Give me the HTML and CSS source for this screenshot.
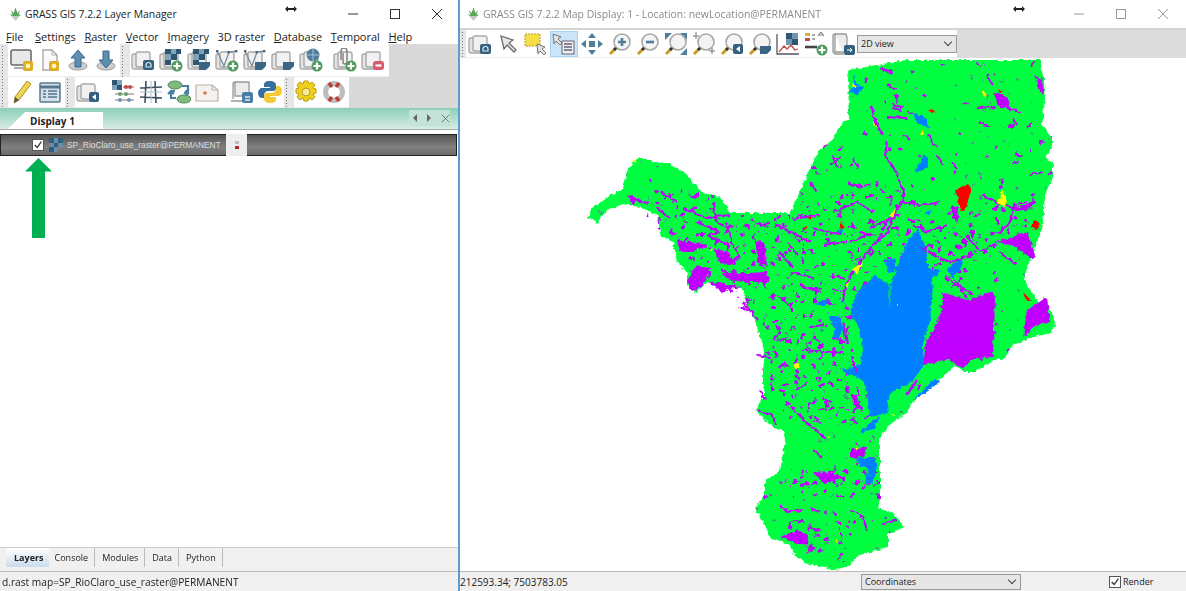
FILE: index.html
```html
<!DOCTYPE html>
<html>
    <head>
        <title>GRASS GIS 7.2.2</title>
        <link rel="stylesheet" href="styles.css">
    </head>
    <body>
        <svg class="defs" width="0" height="0">
            <defs>
                <filter id="rough" filterUnits="userSpaceOnUse" x="460" y="58" width="726" height="513">
                    <feTurbulence type="fractalNoise" baseFrequency=".22" numOctaves="2" seed="4" result="n"/>
                    <feDisplacementMap in="SourceGraphic" in2="n" scale="5" xChannelSelector="R" yChannelSelector="G"/>
                </filter>
                <filter id="specksparse" filterUnits="userSpaceOnUse" x="460" y="58" width="726" height="513" color-interpolation-filters="sRGB">
                    <feTurbulence type="fractalNoise" baseFrequency=".13" numOctaves="2" seed="7"/>
                    <feColorMatrix values="0 0 0 0 .75  0 0 0 0 0  0 0 0 0 1  14 0 0 0 -10" result="s"/>
                    <feComposite in="s" in2="SourceAlpha" operator="in"/>
                </filter>
                <filter id="speckdense" filterUnits="userSpaceOnUse" x="460" y="58" width="726" height="513" color-interpolation-filters="sRGB">
                    <feTurbulence type="fractalNoise" baseFrequency=".16" numOctaves="2" seed="11"/>
                    <feColorMatrix values="0 0 0 0 .75  0 0 0 0 0  0 0 0 0 1  14 0 0 0 -8.9" result="s"/>
                    <feComposite in="s" in2="SourceAlpha" operator="in"/>
                </filter>
                <symbol id="stack" viewBox="0 0 24 24"><rect x="1" y="6" width="14" height="15" rx="2" fill="#e4e4e4" stroke="#a9a9a9" stroke-width="1.4"/><rect x="5" y="4" width="14" height="15" rx="2" fill="#f1f1f1" stroke="#a9a9a9" stroke-width="1.4"/></symbol>
                <symbol id="plus" viewBox="0 0 24 24"><circle cx="18" cy="18" r="5.5" fill="#4f9a5f"/><path d="M18 14.5v7M14.5 18h7" stroke="#fff" stroke-width="2.2"/></symbol>
                <symbol id="minus" viewBox="0 0 24 24"><rect x="12" y="13" width="11" height="9" rx="3" fill="#d9596a"/><path d="M14.5 17.5h6" stroke="#fff" stroke-width="2.2"/></symbol>
                <symbol id="dark" viewBox="0 0 24 24"><rect x="12" y="12" width="11" height="10" rx="2" fill="#33607f"/><path d="M15 17a2.5 2.5 0 0 1 5 0v2h-5z" fill="none" stroke="#dfe8ee" stroke-width="1.2"/></symbol>
                <symbol id="solid" viewBox="0 0 24 24"><path d="M12 14h11v4l-4 4h-7z" fill="#3b6585"/></symbol>
                <symbol id="checker" viewBox="0 0 24 24"><path d="M6 1h6v5H6zM12 6h6v6h-6zM6 12h6v5H6zM17 1h5v5h-5z" fill="#2d5672"/><path d="M12 1h5v5h-5zM6 6h6v6H6z" fill="#7fa3bb"/></symbol>
                <symbol id="rastericon" viewBox="0 0 14 14"><path d="M0 0h5v5H0zM5 5h4v4H5zM0 9h5v5H0zM9 0h5v5H9z" fill="#2f5f80"/><path d="M5 0h4v5H5zM0 5h5v4H0zM9 5h5v4H9zM5 9h4v5H5z" fill="#6b8ea6"/></symbol>
                <symbol id="vector" viewBox="0 0 24 24"><path d="M2 3l7 15 5-14 8-1" fill="none" stroke="#7d8e99" stroke-width="1.3"/><rect x="1" y="2" width="2.4" height="2.4" fill="#567"/><rect x="12.5" y="3" width="2.4" height="2.4" fill="#567"/><rect x="20" y="2" width="2.4" height="2.4" fill="#567"/></symbol>
                <symbol id="monitor" viewBox="0 0 24 24"><rect x="1" y="2" width="20" height="15" rx="2" fill="#e8e8e8" stroke="#666" stroke-width="1.5"/><path d="M4 20h14" stroke="#aaa" stroke-width="2"/><rect x="13" y="13" width="10" height="10" rx="2" fill="#dcae1f"/><circle cx="18" cy="18" r="2.4" fill="#fff3b5"/></symbol>
                <symbol id="doc" viewBox="0 0 24 24"><path d="M5 2h9l5 5v15H5z" fill="#fafafa" stroke="#aaa" stroke-width="1.4"/><path d="M14 2v5h5" fill="none" stroke="#aaa"/><rect x="11" y="13" width="10" height="10" rx="2" fill="#dcae1f"/><circle cx="16" cy="18" r="2.4" fill="#fff3b5"/></symbol>
                <symbol id="up" viewBox="0 0 24 24"><ellipse cx="12" cy="18" rx="9" ry="4" fill="#cfcfcf" stroke="#999"/><path d="M12 2l7 8h-4v9H9v-9H5z" fill="#5f8fb0" stroke="#3d6785"/></symbol>
                <symbol id="down" viewBox="0 0 24 24"><ellipse cx="12" cy="18" rx="9" ry="4" fill="#cfcfcf" stroke="#999"/><path d="M12 20l7-8h-4V3H9v9H5z" fill="#5f8fb0" stroke="#3d6785"/></symbol>
                <symbol id="globe" viewBox="0 0 24 24"><circle cx="14" cy="7" r="6.5" fill="#4f7d9c"/><path d="M8 7h12M14 1v12" stroke="#a8c2d3"/></symbol>
                <symbol id="clip" viewBox="0 0 24 24"><path d="M8 12V3a3 3 0 0 1 6 0v11a2 2 0 0 1-4 0V5" fill="none" stroke="#7d7d7d" stroke-width="1.4"/></symbol>
                <symbol id="pencil" viewBox="0 0 24 24"><path d="M17 1l4 3L9 20l-5 3 1-6z" fill="#ecd552" stroke="#a98f2c"/><path d="M4 23l1-6 4 3z" fill="#555"/></symbol>
                <symbol id="table" viewBox="0 0 24 24"><rect x="2" y="3" width="20" height="19" rx="1" fill="#d5e1ea" stroke="#55788f" stroke-width="1.5"/><path d="M2 7h20" stroke="#55788f" stroke-width="3"/><path d="M5 11h3M10 11h9M5 14h3M10 14h9M5 17h3M10 17h9" stroke="#55788f" stroke-width="1.5"/></symbol>
                <symbol id="calc" viewBox="0 0 24 24"><path d="M1 0h5v5H1zM6 5h5v5H6z" fill="#2d5672"/><path d="M6 0h5v5H6zM1 5h5v5H1z" fill="#7fa3bb"/><path d="M12 7h11M4 14h19M4 20h19" stroke="#8a6f6f"/><circle cx="15" cy="7" r="2" fill="#c94848"/><circle cx="19" cy="7" r="2" fill="#c94848"/><circle cx="9" cy="14" r="2" fill="#62a36c"/><circle cx="15" cy="14" r="2" fill="#62a36c"/><circle cx="9" cy="20" r="2" fill="#6d94b1"/><circle cx="18" cy="20" r="2" fill="#6d94b1"/></symbol>
                <symbol id="grid" viewBox="0 0 24 24"><path d="M7 1l-1 22M16 1l1 22M1 8l22-1M1 17l22 1" stroke="#3a4f5e" stroke-width="1.6" fill="none"/><path d="M1 12h22M12 1v22" stroke="#a9c2d3" fill="none"/></symbol>
                <symbol id="swap" viewBox="0 0 24 24"><ellipse cx="8" cy="5" rx="7" ry="4" fill="#7fbb7f" stroke="#4f8a5a"/><ellipse cx="17" cy="19" rx="7" ry="4" fill="#7fbb7f" stroke="#4f8a5a"/><path d="M15 6h6v7h-3M9 18H4v-7h4M7 14l-3-3-3 3M20 10l-2 3 3 2" fill="none" stroke="#4b7ea3" stroke-width="2.2"/></symbol>
                <symbol id="note" viewBox="0 0 24 24"><path d="M1 5h16l6 5v11H1z" fill="#f5f1ec" stroke="#b9b0a8" stroke-width="1.2"/><path d="M17 5v5h6" fill="none" stroke="#b9b0a8"/><path d="M8 13h4M10 11v4" stroke="#d0754f" stroke-width="1.3"/></symbol>
                <symbol id="script" viewBox="0 0 24 24"><path d="M5 2h14v14H5zM5 2a2 2 0 0 0-2 2v15M1 21h15" fill="#ececec" stroke="#999" stroke-width="1.3"/><rect x="12" y="12" width="11" height="11" rx="2" fill="#4a7ea6"/><path d="M15 17h5M15 20h5" stroke="#dfe8ee" stroke-width="1.4"/></symbol>
                <symbol id="python" viewBox="0 0 24 24"><path d="M12 1c-5 0-6 2-6 4v2h6v1H4c-2 0-4 2-4 5s2 5 4 5h2v-3c0-2 2-4 4-4h5c2 0 3-1 3-3V5c0-2-2-4-6-4z" fill="#376f9f"/><path d="M12 23c5 0 6-2 6-4v-2h-6v-1h8c2 0 4-2 4-5s-2-5-4-5h-2v3c0 2-2 4-4 4H9c-2 0-3 1-3 3v3c0 2 2 4 6 4z" fill="#f4c935"/></symbol>
                <symbol id="gear" viewBox="0 0 24 24"><path d="M10 1h4l1 3 3-2 3 3-2 3 3 1v4l-3 1 2 3-3 3-3-2-1 3h-4l-1-3-3 2-3-3 2-3-3-1v-4l3-1-2-3 3-3 3 2z" fill="#eed01f" stroke="#b99a16"/><circle cx="12" cy="12" r="4" fill="#f8ec9a" stroke="#b99a16"/></symbol>
                <symbol id="ring" viewBox="0 0 24 24"><circle cx="12" cy="12" r="8.5" fill="none" stroke="#bdbdbd" stroke-width="5"/><path d="M7 3l3 4M17 3l-3 4M7 21l3-4M17 21l-3-4" stroke="#b93a3a" stroke-width="3.4"/></symbol>
                <symbol id="pointer" viewBox="0 0 24 24"><path d="M5 4l12 4-4 3 7 7-2 2-7-7-3 4z" fill="#e6e6e6" stroke="#6d6d6d" stroke-width="1.3"/></symbol>
                <symbol id="select" viewBox="0 0 24 24"><rect x="1" y="2" width="15" height="12" fill="#f5df45" stroke="#c09c2b" stroke-dasharray="2 1"/><path d="M13 12l8 3-3 2 4 4-2 2-4-4-2 3z" fill="#e2e2e2" stroke="#777"/></symbol>
                <symbol id="query" viewBox="0 0 24 24"><path d="M1 2l8 3-3 2 4 4-2 2-4-4-2 3z" fill="#e2e2e2" stroke="#777"/><rect x="10" y="9" width="12" height="13" fill="#eee" stroke="#667"/><path d="M12 12h8M12 15h8M12 18h8" stroke="#667" stroke-width="1.3"/></symbol>
                <symbol id="pan" viewBox="0 0 24 24"><path d="M12 1l4 5H8zM12 23l-4-5h8zM1 12l5-4v8zM23 12l-5 4V8z" fill="#4f7d9c"/><rect x="9" y="9" width="6" height="6" fill="#4f7d9c"/></symbol>
                <symbol id="glass" viewBox="0 0 24 24"><circle cx="14" cy="10" r="8" fill="#f4f4f4" stroke="#a8a8a8" stroke-width="1.6"/><path d="M8 16l-6 6" stroke="#c79d22" stroke-width="3"/><path d="M8 16l-2 2" stroke="#333" stroke-width="3"/></symbol>
                <symbol id="glassplus" viewBox="0 0 24 24"><path d="M14 6v8M10 10h8" stroke="#4f7d9c" stroke-width="2.6"/></symbol>
                <symbol id="glassminus" viewBox="0 0 24 24"><path d="M10 10h8" stroke="#4f7d9c" stroke-width="2.6"/></symbol>
                <symbol id="corners" viewBox="0 0 24 24"><path d="M1 1h7L1 8zM23 1h-7l7 7zM23 23h-7l7-7z" fill="#4f7d9c"/></symbol>
                <symbol id="ruler" viewBox="0 0 24 24"><path d="M4 0v7M1 4h6M17 19h6M20 16v6" stroke="#777"/></symbol>
                <symbol id="back" viewBox="0 0 24 24"><rect x="13" y="12" width="10" height="10" rx="2" fill="#33607f"/><path d="M20 14l-4 3 4 3z" fill="#fff"/></symbol>
                <symbol id="profile" viewBox="0 0 24 24"><path d="M1 2v20h22" fill="none" stroke="#556" stroke-width="1.3"/><path d="M10 1h6v6h-6zM16 7h6v6h-6z" fill="#2d5672"/><path d="M16 1h6v6h-6zM10 7h6v6h-6z" fill="#6f97b2"/><path d="M3 20l5-6 3 3 4-4 4 5 3-1" fill="none" stroke="#c94848" stroke-width="1.3"/></symbol>
                <symbol id="legend" viewBox="0 0 24 24"><rect x="1" y="1" width="5" height="3" fill="#d8b23a"/><rect x="1" y="6" width="5" height="3" fill="#c94848"/><path d="M8 3h3M8 7h3" stroke="#555"/><path d="M1 15h12" stroke="#444" stroke-width="2.6"/><path d="M14 4l3-4 3 4M15 3h4" fill="none" stroke="#888" stroke-width="1.2"/></symbol>
                <symbol id="mappage" viewBox="0 0 24 24"><path d="M3 2h11l1 3v15H3zM3 2a2 2 0 0 0-2 2v16l2 2h9" fill="#ececec" stroke="#9a9a9a" stroke-width="1.3"/><rect x="12" y="13" width="11" height="10" rx="2" fill="#33607f"/><path d="M15 18h5M18 16l2 2-2 2" fill="none" stroke="#fff"/></symbol>
                <symbol id="winmin" viewBox="0 0 12 12"><path d="M1 6h10" stroke="currentColor"/></symbol>
                <symbol id="winmax" viewBox="0 0 12 12"><rect x="1.5" y="1.5" width="9" height="9" fill="none" stroke="currentColor"/></symbol>
                <symbol id="winclose" viewBox="0 0 12 12"><path d="M1 1l10 10M11 1L1 11" stroke="currentColor"/></symbol>
                <symbol id="resize" viewBox="0 0 12 8"><path d="M0 4l3-3v2h6V1l3 3-3 3V5H3v2z" fill="#222"/></symbol>
                <symbol id="grasslogo" viewBox="0 0 16 16"><path d="M8 15L2 8l3 1-2-5 3 3 2-6 2 6 3-3-2 5 3-1z" fill="#58a55c"/><path d="M8 15L4 10l8 0z" fill="#c8c8c8"/></symbol>
                <path id="boundary" d="M848 70L906 60L1040 60L1044 80L1045 100L1042 125L1052 137L1052 147L1045 158L1053 163L1052 178L1045 195L1043 225L1033 255L1023 278L1040 305L1050 310L1056 325L1050 333L1030 338L1012 345L1005 358L995 360L975 372L965 372L955 365L942 378L930 383L915 400L905 415L895 420L888 427L885 432L880 437L880 500L878 508L890 512L898 518L904 527L888 535L888 548L870 552L858 556L850 565L835 570L825 567L805 563L793 553L790 545L770 537L765 525L755 508L765 495L765 480L780 472L785 440L783 430L770 425L755 410L765 395L762 375L765 355L755 320L745 300L743 288L708 282L695 293L687 285L687 272L677 262L673 242L662 237L657 215L640 207L623 204L607 210L597 223L588 217L593 207L623 188L628 168L640 157L655 163L668 162L683 172L703 192L720 197L730 213L790 213L810 168L820 150L830 143L843 122L849 118Z"/>
            </defs>
        </svg>

        <div class="app">
            <div class="manager">
                <div class="titlebar">
                    <svg class="applogo"><use href="#grasslogo"/></svg>
                    <span class="apptitle">GRASS GIS 7.2.2 Layer Manager</span>
                    <svg class="cursor"><use href="#resize"/></svg>
                    <div class="winbtns">
                        <svg><use href="#winmin"/></svg>
                        <svg><use href="#winmax"/></svg>
                        <svg><use href="#winclose"/></svg>
                    </div>
                </div>
                <div class="menubar">
                    <span><u>F</u>ile</span>
                    <span><u>S</u>ettings</span>
                    <span><u>R</u>aster</span>
                    <span><u>V</u>ector</span>
                    <span><u>I</u>magery</span>
                    <span>3D r<u>a</u>ster</span>
                    <span><u>D</u>atabase</span>
                    <span><u>T</u>emporal</span>
                    <span><u>H</u>elp</span>
                </div>
                <div class="toolrow first">
                    <div class="grip"></div>
                    <div class="tools pad-a">
                        <svg class="tool"><use href="#monitor"/></svg>
                        <svg class="tool"><use href="#doc"/></svg>
                        <svg class="tool"><use href="#up"/></svg>
                        <svg class="tool"><use href="#down"/></svg>
                    </div>
                    <div class="grip"></div>
                    <div class="tools pad-b">
                        <svg class="tool"><use href="#stack"/><use href="#dark"/></svg>
                        <svg class="tool"><use href="#stack"/><use href="#checker"/><use href="#plus"/></svg>
                        <svg class="tool"><use href="#stack"/><use href="#checker"/><use href="#solid"/></svg>
                        <svg class="tool"><use href="#stack"/><use href="#vector"/><use href="#plus"/></svg>
                        <svg class="tool"><use href="#stack"/><use href="#vector"/><use href="#solid"/></svg>
                        <svg class="tool"><use href="#stack"/><use href="#solid"/></svg>
                        <svg class="tool"><use href="#stack"/><use href="#globe"/><use href="#plus"/></svg>
                        <svg class="tool sep"><use href="#stack"/><use href="#clip"/><use href="#plus"/></svg>
                        <svg class="tool"><use href="#stack"/><use href="#minus"/></svg>
                    </div>
                </div>
                <div class="toolrow second">
                    <div class="grip"></div>
                    <div class="tools pad-c">
                        <svg class="tool"><use href="#pencil"/></svg>
                        <svg class="tool"><use href="#table"/></svg>
                    </div>
                    <div class="grip"></div>
                    <div class="tools pad-f">
                        <svg class="tool"><use href="#stack"/><use href="#back"/></svg>
                        <svg class="tool sep"><use href="#calc"/></svg>
                        <svg class="tool"><use href="#grid"/></svg>
                        <svg class="tool"><use href="#swap"/></svg>
                        <svg class="tool"><use href="#note"/></svg>
                        <svg class="tool sep"><use href="#script"/></svg>
                        <svg class="tool"><use href="#python"/></svg>
                    </div>
                    <div class="grip"></div>
                    <div class="tools pad-d">
                        <svg class="tool"><use href="#gear"/></svg>
                        <svg class="tool"><use href="#ring"/></svg>
                    </div>
                </div>
                <div class="noteband">
                    <div class="displaytab">Display 1</div>
                    <div class="bandctrl">
                        <span class="tri left"></span>
                        <span class="tri right"></span>
                        <svg><use href="#winclose"/></svg>
                    </div>
                </div>
                <div class="treepanel">
                    <div class="layerrow">
                        <span class="treeline"></span>
                        <span class="check">
                            <svg viewBox="0 0 12 12"><path d="M2 6l3 3 5-7" fill="none" stroke="#333" stroke-width="1.5"/></svg>
                        </span>
                        <svg class="layericon"><use href="#rastericon"/></svg>
                        <span class="layername">SP_RioClaro_use_raster@PERMANENT</span>
                        <span class="layerbtn"><i class="dot-a"></i><i class="dot-b"></i></span>
                    </div>
                    <div class="uparrow"></div>
                </div>
                <div class="bottomtabs">
                    <span class="btab active">Layers</span>
                    <span class="btab">Console</span>
                    <span class="btab">Modules</span>
                    <span class="btab">Data</span>
                    <span class="btab">Python</span>
                </div>
                <div class="statusbar">d.rast map=SP_RioClaro_use_raster@PERMANENT</div>
            </div>

            <div class="display">
                <div class="titlebar muted">
                    <svg class="applogo"><use href="#grasslogo"/></svg>
                    <span class="apptitle">GRASS GIS 7.2.2 Map Display: 1 - Location: newLocation@PERMANENT</span>
                    <svg class="cursor"><use href="#resize"/></svg>
                    <div class="winbtns">
                        <svg><use href="#winmin"/></svg>
                        <svg><use href="#winmax"/></svg>
                        <svg><use href="#winclose"/></svg>
                    </div>
                </div>
                <div class="maptools">
                    <div class="grip"></div>
                    <div class="tools pad-e">
                        <svg class="tool"><use href="#stack"/><use href="#dark"/></svg>
                        <svg class="tool"><use href="#pointer"/></svg>
                        <svg class="tool"><use href="#select"/></svg>
                        <span class="toolon"><svg class="tool"><use href="#query"/></svg></span>
                        <svg class="tool"><use href="#pan"/></svg>
                        <svg class="tool"><use href="#glass"/><use href="#glassplus"/></svg>
                        <svg class="tool"><use href="#glass"/><use href="#glassminus"/></svg>
                        <svg class="tool"><use href="#corners"/><use href="#glass"/></svg>
                        <svg class="tool"><use href="#ruler"/><use href="#glass"/></svg>
                        <svg class="tool"><use href="#glass"/><use href="#back"/></svg>
                        <svg class="tool"><use href="#glass"/><use href="#solid"/></svg>
                        <svg class="tool"><use href="#profile"/></svg>
                        <svg class="tool"><use href="#legend"/><use href="#plus"/></svg>
                        <svg class="tool"><use href="#mappage"/></svg>
                        <div class="viewselect">2D view<span class="chev"></span></div>
                    </div>
                </div>
                <div class="mapcanvas">
                    <svg viewBox="460 58 726 513" width="726" height="513">
                        <g filter="url(#rough)">
                            <use href="#boundary" class="land"/>
                            <g filter="url(#specksparse)">
                                <use href="#boundary"/>
                            </g>
                            <!-- busy parts of the basin: west arm and the middle -->
                            <g filter="url(#speckdense)">
                                <path d="M632 185L700 192L730 215L790 215L815 200L880 180L925 205L1035 200L1020 240L950 290L880 265L850 310L810 345L775 325L745 312L708 282L690 290L675 240L650 225Z"/>
                                <path d="M765 300L850 320L860 400L880 430L790 420L760 380Z"/>
                                <path d="M790 470L880 470L880 500L790 500ZM770 520L860 520L840 560L790 540Z"/>
                            </g>
                            <g class="water">
                                <path d="M850 312L857 292L875 275L890 285L907 242L917 228L927 252L927 268L942 270L933 282L932 300L930 320L923 343L923 367L910 383L890 393L887 413L870 417L868 400L863 380L840 370L860 365L863 350L860 330Z"/>
                                <path d="M853 73L858 85L863 87L858 95L850 92L854 84Z"/>
                                <path d="M913 113L923 115L928 123L930 129L923 125L918 125Z"/>
                                <path d="M923 154L928 158L928 167L915 173L918 167Z"/>
                                <path d="M947 268L962 257L963 265L953 279Z"/>
                                <path d="M884 259L895 258L895 272L888 273Z"/>
                                <path d="M815 302L828 300L825 306L817 306Z"/>
                                <path d="M925 212L932 210L928 216Z"/>
                                <path d="M837 232L845 228L840 235Z"/>
                                <path d="M860 433L873 420L880 417L875 428Z"/>
                                <path d="M857 458L875 458L877 470L872 484L866 484L868 470L860 465Z"/>
                                <path d="M913 400L933 380L940 380L930 390Z"/>
                                <path d="M828 317L840 317L843 330L838 338L832 338L835 328Z"/>
                                <path d="M840 302L845 302L844 304Z"/>
                            </g>
                            <path class="land" d="M932 372L950 360L942 378L925 380Z"/>
                            <path class="land" d="M887 400L900 397L910 403L893 420Z"/>
                            <path class="land" d="M932 280L942 270L945 285L935 308Z"/>
                            <path class="landline" d="M890 285V305"/>
                            <g class="crop">
                                <path d="M942 292L967 300L993 291L995 300L993 357L975 358L963 368L950 360L933 363L923 365L925 347L933 330L942 310Z"/>
                                <path d="M997 242L1027 232L1035 255L1032 258L1010 245Z"/>
                                <path d="M1034 75L1042 80L1044 94L1040 91Z"/>
                                <path d="M1013 212L1033 200L1036 202L1027 209Z"/>
                                <path d="M755 240L765 243L767 266L758 263Z"/>
                                <path d="M677 240L697 243L707 245L693 252L680 252Z"/>
                                <path d="M713 248L727 252L737 265L720 263Z"/>
                                <path d="M723 273L747 273L767 272L770 282L743 282L727 279Z"/>
                                <path d="M697 265L710 268L703 285L692 292L687 282Z"/>
                                <path d="M708 282L733 285L743 287L720 290Z"/>
                                <path d="M628 195L638 198L633 206Z"/>
                                <path d="M952 207L958 208L957 222L952 218Z"/>
                                <path d="M993 92L1007 97L1010 108L1000 107Z"/>
                                <path d="M1027 310L1047 297L1050 322L1033 327L1023 337Z"/>
                                <path d="M780 537L797 530L808 535L807 545L793 542Z"/>
                                <path d="M808 527L823 530L817 532Z"/>
                                <path d="M810 543L817 548L807 553Z"/>
                                <path d="M850 448L867 447L863 457L850 458Z"/>
                                <path d="M813 472L833 473L847 478L823 483Z"/>
                                <path d="M852 395L857 395L858 405L853 405Z"/>
                            </g>
                            <g class="streak">
                                <path d="M872 105L873 115L878 127L883 135"/>
                                <path d="M887 142L885 155L895 170L900 183L905 193L900 205L892 218L888 232L873 245L863 258L853 272L845 288L843 302"/>
                                <path d="M630 197L647 203M660 192L677 202M683 208L707 218L730 215M657 208L670 218"/>
                                <path d="M713 203L717 222L727 228L733 245L740 258"/>
                                <path d="M697 222L720 232M707 235L727 245"/>
                                <path d="M750 218L760 225L770 222M775 225L797 235L810 242M780 252L793 268M787 242L797 255"/>
                                <path d="M793 272L813 278M800 285L820 292M777 295L790 305"/>
                                <path d="M813 228L840 235M823 245L847 242M850 242L867 235M870 228L897 215"/>
                                <path d="M800 218L820 215M833 212L857 202L873 212M847 182L863 188M853 158L858 168"/>
                                <path d="M810 182L817 192M810 168L817 168M830 165L840 158M833 155L837 168"/>
                                <path d="M900 202L923 205L940 202M913 225L927 232L947 225M967 235L980 252L997 242"/>
                                <path d="M973 255L950 262L940 258M933 245L923 248L938 258"/>
                                <path d="M982 195L997 203L1013 208L1010 222L1000 232M1027 202L1013 205"/>
                                <path d="M928 135L937 148M937 155L943 165M903 135L910 140M897 148L903 150"/>
                                <path d="M892 105L903 107L900 110L893 108M887 117L907 118M887 85L895 88M880 68L893 73"/>
                                <path d="M977 62L978 65M987 75L993 85M1007 108L1020 112M977 108L997 107M1013 118L1017 125"/>
                                <path d="M1027 127L1033 122M1015 153L1023 157M1013 163L1020 162M1030 175L1043 172M1003 178L1000 188"/>
                                <path d="M823 147L828 145M957 168L953 163M978 122L990 127"/>
                                <path d="M947 278L973 295M957 282L967 298M1000 252L1017 265"/>
                                <path d="M743 302L758 320M757 355L770 357M775 325L780 333L773 340M810 327L823 325M813 337L820 342"/>
                                <path d="M803 350L843 353M837 380L843 380M797 390L807 383M823 398L832 403M793 408L807 423L827 440"/>
                                <path d="M760 390L765 400M757 410L773 415L775 425M813 450L822 457M800 485L808 483M837 497L845 497"/>
                                <path d="M780 505L787 512L803 510M810 508L820 512M852 510L863 517L867 530M832 512L837 515M880 525L897 520"/>
                                <path d="M843 323L847 343M852 357L857 373M917 380L907 395M860 400L853 413M953 343L967 337"/>
                            </g>
                            <g class="burn">
                                <path d="M957 189L969 183L971 189L965 212L962 212L958 203Z"/>
                                <path d="M1030 227L1035 220L1040 225L1037 230Z"/>
                                <path d="M840 222L845 228L840 229Z"/>
                                <path d="M929 110L937 112L930 113Z"/>
                                <path d="M998 90L1004 91L1000 94Z"/>
                                <path d="M1023 292L1031 300L1027 301Z"/>
                                <path d="M803 228L808 227L805 230ZM808 217L812 218L810 221ZM792 290L794 292L792 294Z"/>
                            </g>
                            <g class="dry">
                                <path d="M1002 189L1007 202L1004 207L998 203Z"/>
                                <path d="M921 129L925 134L922 134Z"/>
                                <path d="M982 90L987 96L982 95Z"/>
                                <path d="M633 161L637 160L635 163ZM712 248L713 251L711 251ZM703 238L705 239L703 239Z"/>
                                <path d="M873 118L877 127L875 127ZM852 83L857 87L853 87ZM853 268L863 262L857 275ZM845 285L850 282L847 288ZM890 215L897 208L892 218Z"/>
                                <circle cx="797" cy="366" r="3"/>
                                <circle cx="898" cy="305" r="1"/>
                                <circle cx="829" cy="437" r="1"/>
                                <circle cx="893" cy="415" r="1"/>
                                <circle cx="837" cy="540" r="1"/>
                                <circle cx="857" cy="448" r="1.4"/>
                            </g>
                        </g>
                    </svg>
                </div>
                <div class="mapstatus">
                    <span class="coords">212593.34; 7503783.05</span>
                    <div class="coordselect">Coordinates<span class="chev"></span></div>
                    <span class="check render">
                        <svg viewBox="0 0 12 12"><path d="M2 6l3 3 5-7" fill="none" stroke="#333" stroke-width="1.5"/></svg>
                    </span>
                    <span class="renderlabel">Render</span>
                </div>
            </div>
        </div>
    </body>
</html>
```

FILE: styles.css
```css
body {
    margin: 0;
    background: #fff;
    font-family: "Open Sans", "Noto Sans", sans-serif;
    color: #222;
}
.defs {
    display: block;
    height: 0;
}
.app {
    display: flex;
    width: 1186px;
    height: 591px;
    overflow: hidden;
    filter: blur(.3px);
}
.manager {
    width: 460px;
    flex: none;
    box-sizing: border-box;
    display: flex;
    flex-direction: column;
    border-right: 2px solid #5d9bd3;
    background: #f0f0f0;
}
.display {
    flex: 1;
    display: flex;
    flex-direction: column;
    min-width: 0;
}

/* window title */
.titlebar {
    height: 28px;
    flex: none;
    display: flex;
    align-items: center;
    background: #fff;
    padding-left: 8px;
}
.display .titlebar {
    padding-left: 6px;
}
.applogo {
    width: 15px;
    height: 16px;
    flex: none;
}
.apptitle {
    margin-left: 2px;
    font-size: 10.4px;
    white-space: nowrap;
}
.manager .apptitle {
    width: 260px;
}
.display .apptitle {
    width: 530px;
}
.muted .apptitle {
    color: #8a8a8a;
}
.cursor {
    width: 12px;
    height: 8px;
    margin-bottom: 10px;
    flex: none;
}
.winbtns {
    display: flex;
    gap: 30px;
    margin-left: 50px;
    color: #333;
}
.winbtns svg {
    width: 12px;
    height: 12px;
}
.display .winbtns {
    margin-left: 48px;
    color: #999;
}

/* menu */
.menubar {
    height: 16px;
    flex: none;
    display: flex;
    align-items: center;
    gap: 8.6px;
    padding-left: 6px;
    background: #fff;
    font-size: 11px;
}
.menubar span:first-child {
    margin-right: 3px;
}

/* tool rows */
.toolrow {
    display: flex;
    flex: none;
    background: #d9d9d9;
}
.toolrow.first {
    height: 33px;
}
.toolrow.second {
    height: 31px;
}
.grip {
    width: 8px;
    flex: none;
    background: radial-gradient(circle, #777 0.6px, transparent 1px) 1px 4px / 3px 3px repeat-y, #e6e6e6;
    background-size: 3px 3px;
}
.tools {
    display: flex;
    align-items: center;
    gap: 4px;
    background: #fff;
    border-bottom: 1px solid #eee;
}
.tools + .grip {
    width: 10px;
}
.tool {
    width: 24px;
    height: 24px;
    flex: none;
}
.tool.sep {
    margin-left: 6px;
}
.second .tool.sep {
    margin-left: 7px;
}
.pad-a {
    padding: 0 2px;
}
.pad-b {
    padding: 0 4px 0 1px;
}
.pad-c {
    padding: 0 3px 0 2px;
}
.pad-d {
    padding: 0 3px 0 0;
}
.pad-f {
    padding: 0 2px 0 1px;
}
.toolon {
    display: flex;
    align-items: center;
    justify-content: center;
    width: 28px;
    height: 26px;
    margin: 0 -2px;
    background: #cce4f7;
    border: 1px solid #a9d3f3;
    box-sizing: border-box;
}

/* notebook band */
.noteband {
    height: 22px;
    flex: none;
    display: flex;
    align-items: flex-end;
    justify-content: space-between;
    background: linear-gradient(to bottom, #8ccfb6, #d8ece5);
    border-bottom: 1px solid #a9a9a9;
    box-sizing: border-box;
    padding: 0 8px;
}
.displaytab {
    width: 73px;
    height: 17px;
    padding-left: 22px;
    background: #fff;
    font-size: 10px;
    font-weight: bold;
    line-height: 18px;
    clip-path: polygon(0 100%, 17px 0, 100% 0, 100% 100%);
}
.bandctrl {
    display: flex;
    align-items: center;
    gap: 10px;
    width: 41px;
    height: 16px;
    margin-bottom: 3px;
    padding-left: 4px;
    box-sizing: border-box;
    background: #c4e3d8;
}
.bandctrl svg {
    width: 9px;
    height: 9px;
    color: #555;
}
.tri {
    width: 0;
    height: 0;
    border-top: 4px solid transparent;
    border-bottom: 4px solid transparent;
}
.tri.left {
    border-right: 4px solid #666;
}
.tri.right {
    border-left: 4px solid #666;
}

/* layer tree */
.treepanel {
    flex: 1;
    position: relative;
    background: #fff;
    padding-top: 4px;
    border-bottom: 1px solid #ccc;
}
.layerrow {
    height: 22px;
    box-sizing: border-box;
    display: flex;
    align-items: center;
    margin-right: 1px;
    border: 1px solid #222;
    background: linear-gradient(to bottom, #555, #808080 60%, #6a6a6a);
}
.treeline {
    width: 30px;
    margin-left: 1px;
    border-top: 1px solid #777;
}
.check {
    width: 12px;
    height: 12px;
    box-sizing: border-box;
    flex: none;
    background: #fff;
    border: 1px solid #555;
    display: flex;
}
.layericon {
    width: 14px;
    height: 14px;
    margin-left: 5px;
    flex: none;
}
.layername {
    margin-left: 4px;
    width: 159px;
    font-family: "Liberation Sans", sans-serif;
    font-size: 8.4px;
    color: #dcdcdc;
    white-space: nowrap;
}
.layerbtn {
    width: 21px;
    height: 22px;
    margin: -1px 0;
    background: #eeeeee;
    display: flex;
    flex-direction: column;
    align-items: center;
    justify-content: center;
    gap: 2px;
}
.layerbtn i {
    width: 4px;
    height: 3px;
}
.dot-a {
    background: #bbb;
}
.dot-b {
    background: #b3262e;
}
.uparrow {
    position: absolute;
    left: 25px;
    top: 28px;
    width: 27px;
    height: 80px;
    background: #00b050;
    clip-path: polygon(50% 0, 100% 17%, 74% 17%, 74% 100%, 26% 100%, 26% 17%, 0 17%);
}

/* bottom tabs */
.bottomtabs {
    height: 23px;
    flex: none;
    display: flex;
    align-items: flex-start;
    padding-left: 6px;
    border-bottom: 1px solid #bbb;
    font-size: 9px;
}
.btab {
    height: 19px;
    line-height: 19px;
    padding: 0 6px 0 7px;
    border-right: 1px solid #bbb;
}
.btab:nth-child(2) {
    padding-left: 6px;
}
.btab.active {
    padding: 0 5px 0 8px;
    font-weight: bold;
    border: none;
    background: linear-gradient(to bottom, #fff, #c9dceb);
}
.statusbar {
    height: 19px;
    flex: none;
    box-sizing: border-box;
    padding: 3px 0 0 2px;
    font-size: 10.2px;
    white-space: nowrap;
}

/* map window */
.maptools {
    height: 30px;
    flex: none;
    display: flex;
    box-sizing: border-box;
    border-top: 2px solid #d4d4d4;
    background: #dcdcdc;
}
.maptools .grip {
    width: 6px;
}
.pad-e {
    width: 491px;
    padding-left: 2px;
    box-sizing: border-box;
}
.viewselect {
    width: 100px;
    height: 18px;
    margin-left: -3px;
    box-sizing: border-box;
    padding-left: 3px;
    display: flex;
    align-items: center;
    justify-content: space-between;
    background: #e6e6e6;
    border: 1px solid #999;
    font-size: 9px;
}
.chev {
    width: 5px;
    height: 5px;
    margin: 0 5px 3px 0;
    border-right: 1px solid #444;
    border-bottom: 1px solid #444;
    transform: rotate(45deg);
}
.mapcanvas {
    flex: 1;
    background: #fff;
}
.mapcanvas svg {
    display: block;
}
.land {
    fill: #00ff40;
}
.landline {
    stroke: #00ff40;
    stroke-width: 1;
}
.water {
    fill: #0080ff;
}
.crop {
    fill: #bf00ff;
}
.streak {
    fill: none;
    stroke: #bf00ff;
    stroke-width: 2;
}
.burn {
    fill: #ff0000;
}
.dry {
    fill: #ffff00;
}
.mapstatus {
    height: 20px;
    flex: none;
    display: flex;
    align-items: center;
    background: #f0f0f0;
    border-top: 1px solid #bbb;
    box-sizing: border-box;
    font-size: 10px;
}
.coords {
    width: 401px;
    flex: none;
}
.coordselect {
    width: 160px;
    height: 16px;
    box-sizing: border-box;
    padding-left: 3px;
    display: flex;
    align-items: center;
    justify-content: space-between;
    background: #e6e6e6;
    border: 1px solid #999;
    font-size: 9px;
}
.check.render {
    margin-left: 88px;
}
.renderlabel {
    margin-left: 2px;
    font-size: 9px;
}
```
